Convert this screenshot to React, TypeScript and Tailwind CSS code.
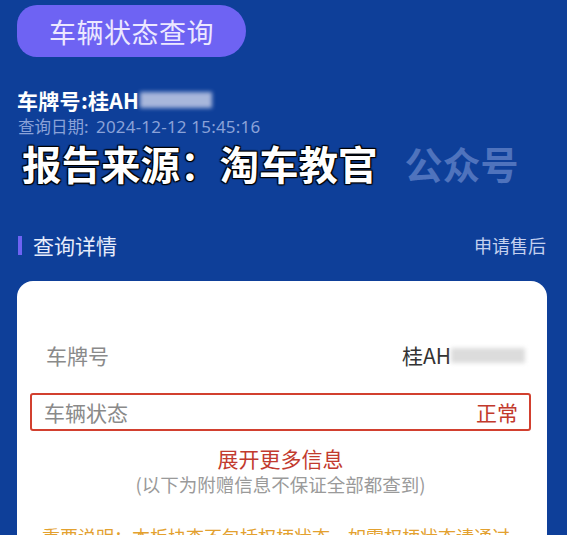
import React from "react";

const font = { fontFamily: '"Noto Sans CJK SC", "Noto Sans", sans-serif' };

export default function App() {
  return (
    <div
      className="w-[567px] h-[535px] overflow-hidden bg-[#0e3f99] relative"
      style={font}
    >
      <div className="pl-[17px] pt-[5px]">
        <div className="w-[229px] h-[52px] bg-[#6e63f3] rounded-l-[20px] rounded-r-[26px] flex items-center justify-center">
          <span className="text-[27px] leading-none text-[#ece8ff] tracking-[0.5px]">车辆状态查询</span>
        </div>
      </div>

      <div className="pl-[17px] mt-[32px] flex items-center h-[22px]">
        <span className="text-[21px] font-bold text-white leading-none tracking-[0.3px]">车牌号:桂AH</span>
        <span className="ml-[1px] inline-block w-[72px] h-[16px] bg-[#b9c4e3] blur-[2px] opacity-90"></span>
      </div>
      <div className="pl-[18px] mt-[6px] h-[18px] flex items-center">
        <span className="text-[16.5px] leading-none text-[#8aa2d8]">查询日期:&nbsp;&nbsp;</span>
        <span className="text-[17px] leading-none text-[#8aa2d8] tracking-[0.2px]" style={{ fontFamily: '"Noto Sans", sans-serif' }}>2024-12-12 15:45:16</span>
      </div>

      <div className="pl-[22px] mt-[5px] h-[46px] flex items-center">
        <span className="text-[39.5px] font-bold leading-none text-white [text-shadow:0_0_2px_#000,1px_1px_1px_#000,-1px_-1px_1px_#000,1px_-1px_1px_#000,-1px_1px_1px_#000]">
          报告来源：淘车教官
        </span>
        <span className="ml-[27px] text-[38px] font-bold leading-none text-[#4f73bd]">公众号</span>
      </div>

      <div className="mt-[47px] h-[24px] flex items-center justify-between pl-[18px] pr-[21px]">
        <div className="flex items-center">
          <span className="w-[4px] h-[19px] bg-[#6e63f3]"></span>
          <span className="ml-[11px] text-[21px] leading-none text-[#e6ecfb]">查询详情</span>
        </div>
        <span className="text-[18px] leading-none text-[#c4d1ef]">申请售后</span>
      </div>

      <div className="mt-[24px] mx-[17px] w-[530px] bg-white rounded-[16px] pt-[61px] pb-[20px] pl-[13px] pr-[16px]">
        <div className="flex items-center justify-between h-[26px] pl-[16px] pr-[6px]">
          <span className="text-[21px] leading-none text-[#8a8a8a]">车牌号</span>
          <div className="flex items-center">
            <span className="text-[21px] leading-none text-[#333]">桂AH</span>
            <span className="inline-block w-[74px] h-[15px] bg-[#dcdcdc] blur-[2px]"></span>
          </div>
        </div>
        <div className="mt-[25px] h-[38px] border-2 border-[#d2402f] rounded-[3px] flex items-center justify-between pl-[12px] pr-[11px]">
          <span className="text-[21px] leading-none text-[#8a8a8a]">车辆状态</span>
          <span className="text-[21px] leading-none text-[#c2392c]">正常</span>
        </div>
        <div className="mt-[17px] text-center text-[21px] leading-none text-[#c23a2e]">展开更多信息</div>
        <div className="mt-[6px] text-center text-[18.5px] leading-none text-[#9a9a9a]">(以下为附赠信息不保证全部都查到)</div>
        <div className="mt-[33px] pl-[12px] text-[18px] leading-none text-[#e3a12f] whitespace-nowrap">
          重要说明：本板块查不包括权柄状态，如需权柄状态请通过
        </div>
      </div>
    </div>
  );
}
